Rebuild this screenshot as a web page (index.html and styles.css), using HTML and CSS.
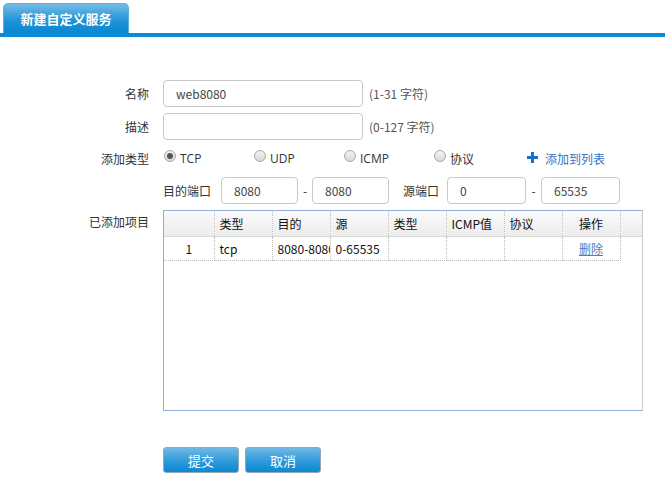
FILE: index.html
```html
<!DOCTYPE html>
<html>
<head>
<meta charset="utf-8">
<link rel="stylesheet" href="styles.css">
</head>
<body>
<div class="tabs">
  <div class="tab">新建自定义服务</div>
</div>
<div class="tabline"></div>
<div class="form">
  <div class="row r1">
    <div class="label">名称</div>
    <input class="text wide" value="web8080">
    <span class="hint">(1-31 字符)</span>
  </div>
  <div class="row r2">
    <div class="label">描述</div>
    <input class="text wide" value="">
    <span class="hint">(0-127 字符)</span>
  </div>
  <div class="row r3">
    <div class="label">添加类型</div>
    <div class="radios">
      <span class="opt o1"><span class="radio checked"></span>TCP</span>
      <span class="opt o2"><span class="radio"></span>UDP</span>
      <span class="opt o3"><span class="radio"></span>ICMP</span>
      <span class="opt o4"><span class="radio"></span>协议</span>
      <span class="add"><svg width="11" height="11" viewBox="0 0 11 11"><path d="M4 0h3v4h4v3H7v4H4V7H0V4h4z" fill="#1d6ec8"/></svg>添加到列表</span>
    </div>
  </div>
  <div class="row r4">
    <div class="label"></div>
    <div class="ports">
      <span class="plabel">目的端口</span>
      <input class="text port" value="8080">
      <span class="dash">-</span>
      <input class="text port" value="8080">
      <span class="plabel src">源端口</span>
      <input class="text port p2" value="0">
      <span class="dash d2">-</span>
      <input class="text port p2" value="65535">
    </div>
  </div>
  <div class="row r5">
    <div class="label lt">已添加项目</div>
    <div class="grid">
      <table>
        <colgroup>
          <col class="c1"><col class="c"><col class="c"><col class="c"><col class="c"><col class="c"><col class="c"><col class="c"><col>
        </colgroup>
        <thead>
          <tr><th></th><th>类型</th><th>目的</th><th>源</th><th>类型</th><th>ICMP值</th><th>协议</th><th class="ctr">操作</th><th class="last"></th></tr>
        </thead>
        <tbody>
          <tr><td class="ctr">1</td><td>tcp</td><td>8080-8080</td><td>0-65535</td><td></td><td></td><td></td><td class="ctr"><a class="del">删除</a></td><td class="last"></td></tr>
        </tbody>
      </table>
    </div>
  </div>
  <div class="row r6">
    <div class="label"></div>
    <button class="btn">提交</button>
    <button class="btn">取消</button>
  </div>
</div>
</body>
</html>
```
FILE: styles.css
```css
* { box-sizing: border-box; }
body {
  margin: 0;
  background: #fff;
  font-family: "Noto Sans CJK SC", "Noto Sans", sans-serif;
  font-size: 12px;
  color: #333;
  width: 665px;
  height: 487px;
  overflow: hidden;
}
.tabs { padding: 3px 0 0 3px; height: 33px; }
.tab {
  width: 126px;
  height: 30px;
  border-radius: 5px 5px 0 0;
  background: linear-gradient(#75bbe6, #1b92d8 60%, #0a88d4);
  border: 1px solid #5aaee0;
  border-bottom: none;
  color: #fff;
  font-weight: bold;
  font-size: 13px;
  line-height: 29px;
  text-align: center;
}
.tabline { height: 4px; background: #0b8ad5; }
.form { padding-top: 43px; }
.row { display: flex; align-items: center; }
.label {
  width: 149px;
  text-align: right;
  margin-right: 14px;
  flex: none;
  color: #333;
}
.text {
  font-family: "Noto Sans CJK SC", "Noto Sans", sans-serif;
  font-size: 12px;
  color: #444;
  border: 1px solid #c8c8c8;
  border-radius: 4px;
  height: 27px;
  padding: 0 0 0 12px;
  outline: none;
  background: #fff;
  flex: none;
}
.wide { width: 200px; }
.hint { margin-left: 6px; color: #555; }
.r2 { margin-top: 6px; }
.r3 { margin-top: 6px; height: 24px; }
.radios { display: flex; align-items: center; width: 460px; }
.opt { display: flex; align-items: center; font-family: "Open Sans", "Noto Sans CJK SC", sans-serif; color: #333; }
.o1 { width: 90px; margin-left: 1px; }
.o2 { width: 90px; }
.o3 { width: 90px; }
.o4 { width: 93px; font-family: "Noto Sans CJK SC", sans-serif; }
.radio {
  width: 12px;
  height: 12px;
  border-radius: 50%;
  border: 1px solid #a8a8a8;
  background: linear-gradient(#f4f4f4, #d8d8d8);
  margin-right: 4px;
  position: relative;
  top: -2px;
}
.radio.checked::after {
  content: "";
  position: absolute;
  left: 2px; top: 2px;
  width: 6px; height: 6px;
  border-radius: 50%;
  background: #555;
}
.add { display: flex; align-items: center; color: #3a6fc4; }
.add svg { margin-right: 7px; position: relative; top: -1px; }
.r4 { margin-top: 7px; }
.ports { display: flex; align-items: center; }
.plabel { color: #333; width: 58px; flex: none; white-space: nowrap; }
.plabel.src { padding-left: 14px; }
.port { width: 77px; }
.port.p2 { width: 79px; }
.dash { width: 14px; flex: none; text-align: center; color: #333; }
.dash.d2 { width: 15px; }
.r5 { margin-top: 6px; align-items: flex-start; }
.lt { padding-top: 3px; }
.grid {
  width: 480px;
  height: 201px;
  border: 1px solid #92b0de;
  border-right-color: #c8c8c8;
}
table {
  border-collapse: collapse;
  table-layout: fixed;
  width: 100%;
  font-family: "Noto Sans CJK SC", "Noto Sans", sans-serif;
  font-size: 12px;
  color: #111;
}
col.c1 { width: 50px; }
col.c { width: 58px; }
th {
  height: 25px;
  font-weight: normal;
  text-align: left;
  padding: 0 5px;
  background: linear-gradient(#fafafa, #ececec);
  border-right: 1px dotted #bbb;
  border-bottom: 1px solid #d8d8d8;
  white-space: nowrap;
  overflow: hidden;
}
td {
  height: 24px;
  padding: 0 5px;
  border-right: 1px dotted #bbb;
  border-bottom: 1px dotted #bbb;
  white-space: nowrap;
  overflow: hidden;
}
th.last { border-right: none; }
td.last { border: none; }
.ctr { text-align: center; }
.del { color: #5878c0; text-decoration: underline; }
.r6 { margin-top: 36px; }
.btn {
  width: 76px;
  height: 26px;
  margin-right: 6px;
  border: 1px solid #96a6b4;
  border-radius: 3px;
  background: linear-gradient(#72b8e4, #2d9ad9 55%, #0b89d3);
  color: #fff;
  font-family: "Noto Sans CJK SC", sans-serif;
  font-size: 13px;
  padding: 0;
}
```
